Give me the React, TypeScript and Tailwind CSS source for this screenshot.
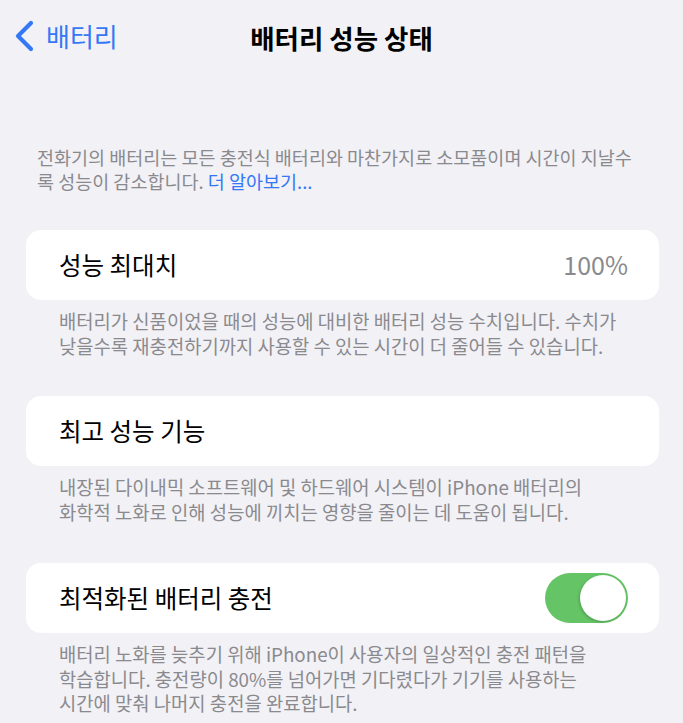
import React from 'react';

const font = { fontFamily: '"Noto Sans CJK KR", "Noto Sans", sans-serif' };

export default function App() {
  return (
    <div style={font} className="min-h-[723px] w-[683px] bg-[#f2f1f6] overflow-hidden">
      {/* nav bar */}
      <div className="relative h-[74px] flex items-center justify-center">
        <div className="absolute left-[13px] top-[20px] flex items-center gap-[11px] text-[#3478f6]">
          <svg width="22" height="32" viewBox="0 0 22 32" fill="none">
            <path d="M18 3 L5 16 L18 29" stroke="#3478f6" strokeWidth="4.2" strokeLinecap="round" strokeLinejoin="round" />
          </svg>
          <span className="text-[26px] leading-[32px]">배터리</span>
        </div>
        <h1 className="text-[26.5px] font-bold text-black leading-[32px] mt-[2px]">배터리 성능 상태</h1>
      </div>

      <p className="mt-[71px] pl-[37px] text-[18.5px] leading-[24px] text-[#8a8a8e] whitespace-nowrap">
        전화기의 배터리는 모든 충전식 배터리와 마찬가지로 소모품이며 시간이 지날수
        <br />
        록 성능이 감소합니다. <span className="text-[#3478f6]">더 알아보기...</span>
      </p>

      <div className="mt-[37px] pl-[26px] pr-[24px] flex flex-col">
        <Row label="성능 최대치" right={<span className="text-[25px] text-[#8a8a8e]">100%</span>} />
        <Footer lines={['배터리가 신품이었을 때의 성능에 대비한 배터리 성능 수치입니다. 수치가', '낮을수록 재충전하기까지 사용할 수 있는 시간이 더 줄어들 수 있습니다.']} />

        <div className="h-[38px]" />
        <Row label="최고 성능 기능" />
        <Footer lines={['내장된 다이내믹 소프트웨어 및 하드웨어 시스템이 iPhone 배터리의', '화학적 노화로 인해 성능에 끼치는 영향을 줄이는 데 도움이 됩니다.']} />

        <div className="h-[39px]" />
        <Row label="최적화된 배터리 충전" right={<Toggle />} />
        <Footer
          lines={[
            '배터리 노화를 늦추기 위해 iPhone이 사용자의 일상적인 충전 패턴을',
            '학습합니다. 충전량이 80%를 넘어가면 기다렸다가 기기를 사용하는',
            '시간에 맞춰 나머지 충전을 완료합니다.',
          ]}
        />
      </div>
    </div>
  );
}

function Row({ label, right }: { label: string; right?: React.ReactNode }) {
  return (
    <div className="h-[70px] bg-white rounded-[15px] pl-[33px] pr-[31px] flex items-center justify-between">
      <span className="text-[24.5px] text-black">{label}</span>
      {right}
    </div>
  );
}

function Footer({ lines }: { lines: string[] }) {
  return (
    <div className="mt-[9px] pl-[33px] text-[18.8px] leading-[24.5px] text-[#8a8a8e] whitespace-nowrap">
      {lines.map((l) => (
        <div key={l}>{l}</div>
      ))}
    </div>
  );
}

function Toggle() {
  return (
    <div className="w-[83px] h-[50px] rounded-full bg-[#65c466] flex items-center justify-end pr-[2px]">
      <div className="w-[46px] h-[46px] rounded-full bg-white shadow-[-1px_1px_3px_rgba(0,0,0,0.2)]" />
    </div>
  );
}
